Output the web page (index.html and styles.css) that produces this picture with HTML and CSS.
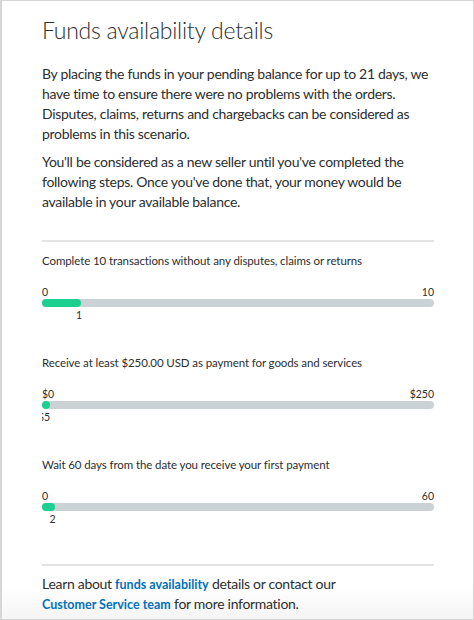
FILE: index.html
```html
<!DOCTYPE html>
<html lang="en">
<head>
<meta charset="utf-8">
<title>Funds availability details</title>
<link rel="stylesheet" href="styles.css">
</head>
<body>
<div class="panel">
  <h1 class="title">Funds availability details</h1>
  <p class="text">By placing the funds in your pending balance for up to 21 days, we have time to ensure there were no problems with the orders. Disputes, claims, returns and chargebacks can be considered as problems in this scenario.</p>
  <p class="text">You'll be considered as a new seller until you've completed the following steps. Once you've done that, your money would be available in your available balance.</p>
  <hr class="divider">
  <div class="steps">
    <div class="step">
      <div class="step-label">Complete 10 transactions without any disputes, claims or returns</div>
      <div class="range"><span>0</span><span>10</span></div>
      <div class="track"><div class="fill" style="width:10%"></div></div>
      <div class="value-row"><span class="value" style="margin-left:37px">1</span></div>
    </div>
    <div class="step">
      <div class="step-label">Receive at least $250.00 USD as payment for goods and services</div>
      <div class="range"><span>$0</span><span>$250</span></div>
      <div class="track"><div class="fill" style="width:2%"></div></div>
      <div class="value-row"><span class="value" style="margin-left:2px">$5</span></div>
    </div>
    <div class="step">
      <div class="step-label">Wait 60 days from the date you receive your first payment</div>
      <div class="range"><span>0</span><span>60</span></div>
      <div class="track"><div class="fill" style="width:3.33%"></div></div>
      <div class="value-row"><span class="value" style="margin-left:10.5px">2</span></div>
    </div>
  </div>
  <hr class="divider divider-bottom">
  <p class="footer">Learn about <a class="link" href="#">funds availability</a> details or contact our <a class="link" href="#">Customer Service team</a> for more information.</p>
</div>
</body>
</html>
```
FILE: styles.css
```css
html, body {
  margin: 0;
  padding: 0;
  background: #ffffff;
}
.panel {
  box-sizing: border-box;
  width: 474px;
  height: 620px;
  border: 1px solid #d6d6d6;
  border-left-width: 2px;
  padding: 14px 39px 0 40px;
  background: linear-gradient(to bottom, #ffffff 0, #ffffff 585px, #f4f4f4 620px);
  font-family: Lato, "Noto Sans", sans-serif;
  color: #2c2e2f;
  overflow: hidden;
}
.title {
  margin: 0 0 19px;
  font-size: 23px;
  font-weight: 300;
  line-height: 30px;
  letter-spacing: -0.25px;
  color: #2c2e2f;
}
.text {
  margin: 0 0 8px;
  font-size: 14px;
  line-height: 20px;
  letter-spacing: -0.3px;
}
.divider {
  border: 0;
  height: 2px;
  background: #e1e3e4;
  margin: 28px 0 0;
}
.steps {
  display: flex;
  flex-direction: column;
}
.step {
  padding-top: 11px;
  height: 91px;
}
.step-label {
  font-size: 11.5px;
  line-height: 16px;
  letter-spacing: -0.1px;
}
.range {
  display: flex;
  justify-content: space-between;
  font-size: 10.5px;
  line-height: 14px;
  margin-top: 16px;
}
.track {
  height: 8px;
  border-radius: 4px;
  background: #cbd2d6;
  display: flex;
}
.fill {
  min-width: 8px;
  height: 8px;
  border-radius: 4px;
  background: #1ed08f;
}
.value-row {
  overflow: hidden;
  font-size: 10.5px;
  line-height: 16px;
  white-space: nowrap;
}
.value {
  display: inline-block;
  transform: translateX(-50%);
}
.divider-bottom {
  margin-top: 16px;
}
.footer {
  margin: 8px 0 0;
  font-size: 14px;
  line-height: 20px;
  letter-spacing: -0.3px;
}
.link {
  color: #0070ba;
  font-weight: 700;
  font-size: 12.5px;
  line-height: 14px;
  letter-spacing: 0;
  text-decoration: none;
  white-space: nowrap;
}
```
